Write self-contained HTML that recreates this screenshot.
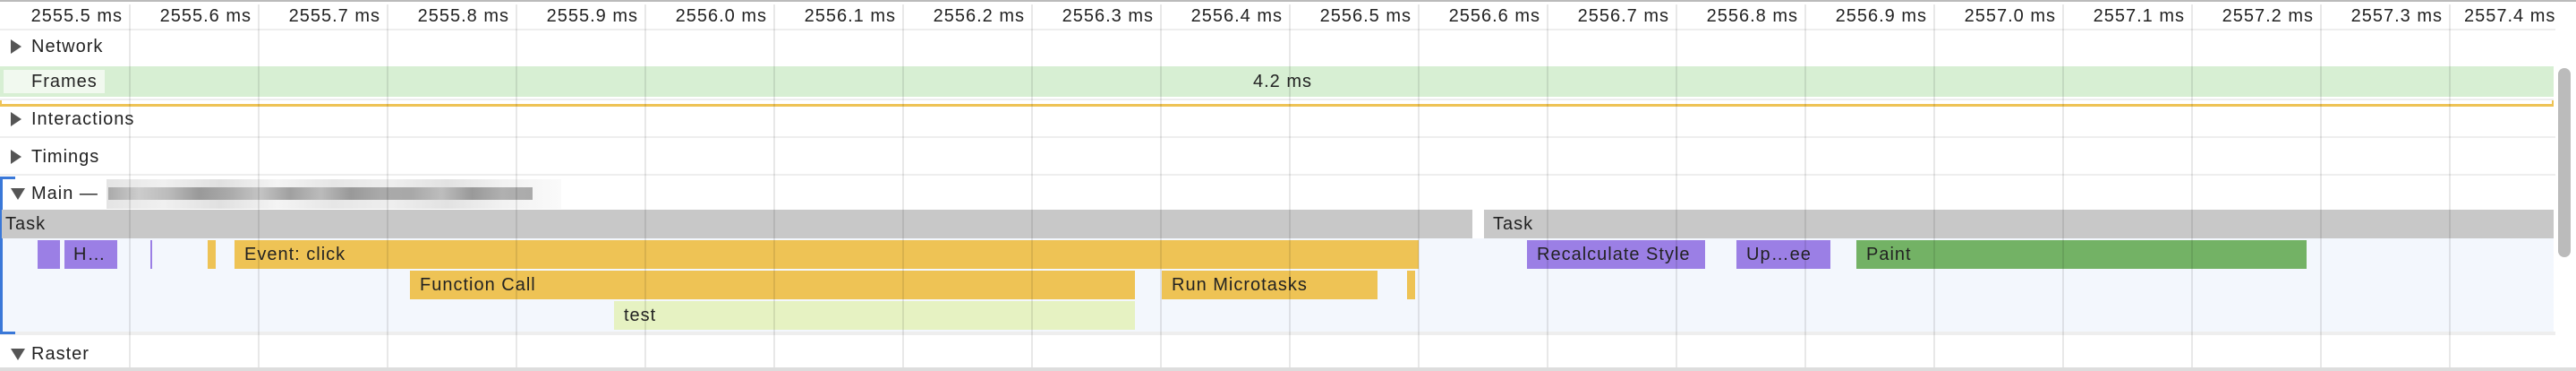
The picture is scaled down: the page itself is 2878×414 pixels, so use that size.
<!DOCTYPE html>
<html><head><meta charset="utf-8"><style>
body{margin:0;width:2878px;height:414px;overflow:hidden;background:#fff;font-family:"Liberation Sans",sans-serif;font-size:20px;letter-spacing:1px;color:#222;position:relative}
div{position:absolute;box-sizing:border-box}
.t{white-space:nowrap;line-height:32px}
.bar{height:32px;line-height:32px;padding-left:11px;white-space:nowrap;overflow:hidden;color:#222}
.y{background:#eec355}.p{background:#9b7fe5}
.gl{top:5px;width:2px;height:405px;background:rgba(0,0,0,0.09)}
.lab{left:35px;line-height:32px}
.tri{left:12px;width:0;height:0;border-top:8px solid transparent;border-bottom:8px solid transparent;border-left:12px solid #555}
.trd{left:12px;width:0;height:0;border-left:8px solid transparent;border-right:8px solid transparent;border-top:13px solid #555}
</style></head><body>
<div style="left:0;top:0;width:2878px;height:2px;background:#bbb"></div>
<div style="left:0;top:410px;width:2878px;height:4px;background:#ddd"></div>
<div style="left:0;top:32px;width:2855px;height:2px;background:#eee"></div>
<div style="left:0;top:74px;width:2853px;height:34px;background:#d7efd3"></div>
<div style="left:4px;top:78px;width:113px;height:26px;background:#f1f9ef"></div>
<div class="t" style="left:35px;top:75px;">Frames</div>
<div class="t" style="left:1400px;top:75px;">4.2 ms</div>
<div style="left:0;top:110px;width:2853px;height:2px;background:#eee"></div>
<div style="left:0;top:116px;width:2853px;height:3px;background:#eec355"></div>
<div style="left:0;top:112px;width:2px;height:7px;background:#eec355"></div>
<div style="left:2851px;top:112px;width:2px;height:7px;background:#eec355"></div>
<div style="left:0;top:152px;width:2855px;height:2px;background:#eee"></div>
<div style="left:0;top:194px;width:2855px;height:2px;background:#eee"></div>
<div style="left:0;top:266px;width:2853px;height:104px;background:#f3f7fd"></div>
<div style="left:0;top:370px;width:2855px;height:4px;background:#eee"></div>
<div class="tri" style="top:44px"></div><div class="t lab" style="top:36px">Network</div>
<div class="tri" style="top:125px"></div><div class="t lab" style="top:117px">Interactions</div>
<div class="tri" style="top:167px"></div><div class="t lab" style="top:159px">Timings</div>
<div class="trd" style="top:210px"></div><div class="t lab" style="top:200px">Main —</div>
<div style="left:119px;top:200px;width:508px;height:33px;background:linear-gradient(90deg,#e4e4e4,#f0f0f0,#e0e0e0,#f4f4f4,#e6e6e6,#eee,#e2e2e2,#f2f2f2,#fafafa)"></div>
<div style="left:121px;top:209px;width:474px;height:14px;background:linear-gradient(90deg,#aaa,#ccc,#bbb,#999,#aaa,#c4c4c4,#a0a0a0,#bbb,#999,#aaa,#a8a8a8,#bdbdbd,#999,#b0b0b0,#aaa)"></div>
<div class="trd" style="top:389px"></div><div class="t lab" style="top:379px">Raster</div>
<div style="left:0;top:197px;width:3px;height:176px;background:#3a78d8"></div>
<div style="left:0;top:197px;width:17px;height:3px;background:#3a78d8"></div>
<div style="left:0;top:370px;width:17px;height:3px;background:#3a78d8"></div>
<div class="bar" style="left:2px;top:234px;width:1643px;background:#c8c8c8;padding-left:4px">Task</div>
<div class="bar" style="left:1658px;top:234px;width:1195px;background:#c8c8c8;padding-left:10px">Task</div>
<div class="bar p" style="left:42px;top:268px;width:25px"></div>
<div class="bar p" style="left:72px;top:268px;width:59px;padding-left:10px">H…</div>
<div style="left:168px;top:268px;width:2px;height:32px;background:#9b7fe5"></div>
<div class="bar y" style="left:232px;top:268px;width:9px;padding:0"></div>
<div class="bar y" style="left:262px;top:268px;width:1323px">Event: click</div>
<div class="bar p" style="left:1706px;top:268px;width:199px">Recalculate Style</div>
<div class="bar p" style="left:1940px;top:268px;width:105px">Up…ee</div>
<div class="bar" style="left:2074px;top:268px;width:503px;background:#73b265">Paint</div>
<div class="bar y" style="left:458px;top:302px;width:810px">Function Call</div>
<div class="bar y" style="left:1298px;top:302px;width:241px">Run Microtasks</div>
<div class="bar y" style="left:1572px;top:302px;width:9px;padding:0"></div>
<div class="bar" style="left:686px;top:336px;width:582px;background:#e6f2c2">test</div>
<div class="t" style="left:0;top:2px;width:2878px;height:30px;line-height:32px">
<div style="right:2741px">2555.5 ms</div>
<div style="right:2597px">2555.6 ms</div>
<div style="right:2453px">2555.7 ms</div>
<div style="right:2309px">2555.8 ms</div>
<div style="right:2165px">2555.9 ms</div>
<div style="right:2021px">2556.0 ms</div>
<div style="right:1877px">2556.1 ms</div>
<div style="right:1733px">2556.2 ms</div>
<div style="right:1589px">2556.3 ms</div>
<div style="right:1445px">2556.4 ms</div>
<div style="right:1301px">2556.5 ms</div>
<div style="right:1157px">2556.6 ms</div>
<div style="right:1013px">2556.7 ms</div>
<div style="right:869px">2556.8 ms</div>
<div style="right:725px">2556.9 ms</div>
<div style="right:581px">2557.0 ms</div>
<div style="right:437px">2557.1 ms</div>
<div style="right:293px">2557.2 ms</div>
<div style="right:149px">2557.3 ms</div>
<div style="left:2753px">2557.4 ms</div>
</div>
<div class="gl" style="left:144px"></div><div class="gl" style="left:288px"></div><div class="gl" style="left:432px"></div><div class="gl" style="left:576px"></div><div class="gl" style="left:720px"></div><div class="gl" style="left:864px"></div><div class="gl" style="left:1008px"></div><div class="gl" style="left:1152px"></div><div class="gl" style="left:1296px"></div><div class="gl" style="left:1440px"></div><div class="gl" style="left:1584px"></div><div class="gl" style="left:1728px"></div><div class="gl" style="left:1872px"></div><div class="gl" style="left:2016px"></div><div class="gl" style="left:2160px"></div><div class="gl" style="left:2304px"></div><div class="gl" style="left:2448px"></div><div class="gl" style="left:2592px"></div><div class="gl" style="left:2736px"></div>
<div style="left:2858px;top:76px;width:14px;height:211px;background:#bbb;border-radius:7px"></div>
</body></html>
